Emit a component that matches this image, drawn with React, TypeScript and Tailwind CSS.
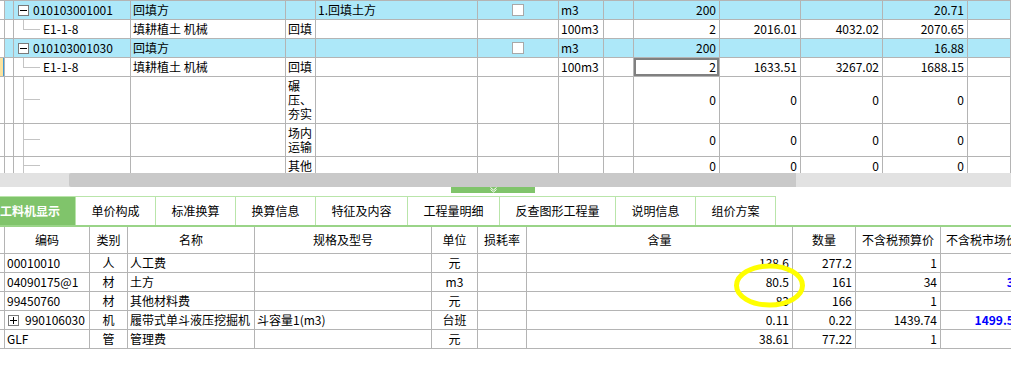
import React from 'react'

type Align = 'left' | 'right' | 'center' | 'none'

const topW = [
  'w-[5px]', 'w-[9px]', 'w-[117px]', 'w-[155px]', 'w-[30px]', 'w-[162px]', 'w-[81px]',
  'w-[45px]', 'w-[30px]', 'w-[86px]', 'w-[81px]', 'w-[82px]', 'w-[85px]', 'w-[60px]',
]

const botW = [
  'w-[5px]', 'w-[85px]', 'w-[38px]', 'w-[127px]', 'w-[177px]', 'w-[46px]', 'w-[49px]',
  'w-[266px]', 'w-[63px]', 'w-[85px]', 'w-[84px]',
]

const Cell = ({
  w,
  align = 'left',
  className = '',
  children,
}: {
  w: string
  align?: Align
  className?: string
  children?: React.ReactNode
}) => {
  const a =
    align === 'right'
      ? 'justify-end pr-[3px] text-right'
      : align === 'center'
        ? 'justify-center text-center'
        : align === 'left'
          ? 'justify-start pl-[2px]'
          : ''
  return (
    <div className={`${w} shrink-0 flex items-center border-r border-[#b4b4b4] overflow-hidden whitespace-pre-wrap ${a} ${className}`}>
      {children}
    </div>
  )
}

const MinusBox = () => (
  <span className="w-[11px] h-[11px] border border-[#7a7a7a] bg-white flex items-center justify-center shrink-0">
    <span className="w-[7px] h-px bg-black" />
  </span>
)

const PlusBox = () => (
  <span className="relative w-[11px] h-[11px] border border-[#7a7a7a] bg-white flex items-center justify-center shrink-0">
    <span className="w-[7px] h-px bg-black" />
    <span className="absolute w-px h-[7px] bg-black" />
  </span>
)

const CheckBox = () => <span className="w-[12px] h-[12px] border border-[#a8a8a8] bg-white" />

// 明细行的树形连线
const ChildBranch = ({ label }: { label: string }) => (
  <div className="flex h-full items-start">
    <div className="ml-[9px] w-[17px] h-[10px] border-l border-b border-[#c4c4c4]" />
    <span className="ml-[3px] self-center">{label}</span>
  </div>
)

const FullBranch = () => (
  <div className="flex h-full">
    <div className="ml-[9px] w-[17px] h-full border-l border-[#c4c4c4] flex flex-col">
      <div className="h-1/2 border-b border-[#c4c4c4]" />
    </div>
  </div>
)

type TopRow = {
  h: string
  blue?: boolean
  marker?: boolean
  tree: React.ReactNode
  cells: (string | null)[]
  check?: boolean
  selected?: boolean
}

const topRows: TopRow[] = [
  {
    h: 'h-[19px]',
    blue: true,
    check: true,
    tree: (
      <div className="flex items-center gap-[4px] ml-[4px]">
        <MinusBox />
        <span>010103001001</span>
      </div>
    ),
    cells: ['回填方', '', '1.回填土方', null, 'm3', '', '200', '', '', '20.71', ''],
  },
  {
    h: 'h-[19px]',
    tree: <ChildBranch label="E1-1-8" />,
    cells: ['填耕植土 机械', '回填', '', '', '100m3', '', '2', '2016.01', '4032.02', '2070.65', ''],
  },
  {
    h: 'h-[19px]',
    blue: true,
    check: true,
    tree: (
      <div className="flex items-center gap-[4px] ml-[4px]">
        <MinusBox />
        <span>010103001030</span>
      </div>
    ),
    cells: ['回填方', '', '', null, 'm3', '', '200', '', '', '16.88', ''],
  },
  {
    h: 'h-[19px]',
    marker: true,
    selected: true,
    tree: <ChildBranch label="E1-1-8" />,
    cells: ['填耕植土 机械', '回填', '', '', '100m3', '', '2', '1633.51', '3267.02', '1688.15', ''],
  },
  {
    h: 'h-[47px]',
    tree: <FullBranch />,
    cells: ['', '碾压、夯实', '', '', '', '', '0', '0', '0', '0', ''],
  },
  {
    h: 'h-[33px]',
    tree: <FullBranch />,
    cells: ['', '场内运输', '', '', '', '', '0', '0', '0', '0', ''],
  },
  {
    h: 'h-[19px]',
    tree: <FullBranch />,
    cells: ['', '其他', '', '', '', '', '0', '0', '0', '0', ''],
  },
]

const rightCols = [6, 7, 8, 9]

const tabs = ['工料机显示', '单价构成', '标准换算', '换算信息', '特征及内容', '工程量明细', '反查图形工程量', '说明信息', '组价方案']
const tabW = ['w-[76px]', 'w-[80px]', 'w-[80px]', 'w-[80px]', 'w-[92px]', 'w-[92px]', 'w-[116px]', 'w-[80px]', 'w-[80px]']

const headers = ['', '编码', '类别', '名称', '规格及型号', '单位', '损耗率', '含量', '数量', '不含税预算价', '不含税市场价']

type BotRow = {
  code: string
  plus?: boolean
  kind: string
  name: string
  spec: string
  unit: string
  qty: string
  amount: string
  budget: string
  market?: string
}

const botRows: BotRow[] = [
  { code: '00010010', kind: '人', name: '人工费', spec: '', unit: '元', qty: '138.6', amount: '277.2', budget: '1' },
  { code: '04090175@1', kind: '材', name: '土方', spec: '', unit: 'm3', qty: '80.5', amount: '161', budget: '34', market: '34' },
  { code: '99450760', kind: '材', name: '其他材料费', spec: '', unit: '元', qty: '83', amount: '166', budget: '1' },
  { code: '990106030', plus: true, kind: '机', name: '履带式单斗液压挖掘机', spec: '斗容量1(m3)', unit: '台班', qty: '0.11', amount: '0.22', budget: '1439.74', market: '1499.55' },
  { code: 'GLF', kind: '管', name: '管理费', spec: '', unit: '元', qty: '38.61', amount: '77.22', budget: '1' },
]

export default function App() {
  return (
    <div className="relative w-[1011px] h-[371px] overflow-hidden bg-white text-black text-[12px] leading-[14px] font-[family-name:'Noto_Sans_CJK_SC',sans-serif]">
      {/* 上部清单表格 */}
      <div className="h-[173px] overflow-hidden border-t border-[#b4b4b4]">
        {topRows.map((r, i) => (
          <div key={i} className={`flex ${r.h} border-b border-[#b4b4b4] ${r.blue ? 'bg-[#ade8f9]' : 'bg-white'}`}>
            <Cell w={topW[0]} align="none" className="bg-white">
              {r.marker && (
                <div className="flex h-full">
                  <div className="w-[3px] bg-[#fbe3a0]" />
                  <div className="w-px bg-[#3d9ad6]" />
                </div>
              )}
            </Cell>
            <Cell w={topW[1]} align="none" />
            <Cell w={topW[2]} align="none" className="items-stretch">
              <div className="flex h-full items-center">{r.tree}</div>
            </Cell>
            {r.cells.map((c, j) => {
              const col = j + 3
              if (c === null) {
                return (
                  <Cell key={j} w={topW[col]} align="center">
                    {r.check && <CheckBox />}
                  </Cell>
                )
              }
              const isRight = rightCols.includes(j)
              const sel = r.selected && j === 6
              return (
                <Cell
                  key={j}
                  w={topW[col]}
                  align={isRight ? 'right' : 'left'}
                  className={`${j === 10 ? 'flex-1' : ''} ${sel ? 'bg-white shadow-[inset_0_0_0_2px_#808080]' : ''}`}
                >
                  {c}
                </Cell>
              )
            })}
          </div>
        ))}
      </div>

      {/* 横向滚动条 */}
      <div className="flex h-[14px] bg-[#e2e2e2]">
        <div className="w-[69px]" />
        <div className="w-[727px] bg-[#c9c9c9] rounded-l-[2px]" />
      </div>

      {/* 分隔拖动柄 */}
      <div className="h-[9px] flex">
        <div className="ml-[451px] w-[84px] h-[6px] bg-[#80c46b] flex justify-center">
          <svg width="9" height="6" viewBox="0 0 9 6" className="block">
            <polyline points="1.5,0.5 4.5,3 7.5,0.5" fill="none" stroke="#ffffff" strokeWidth="1" />
            <polyline points="1.5,2.5 4.5,5 7.5,2.5" fill="none" stroke="#ffffff" strokeWidth="1" />
          </svg>
        </div>
      </div>

      {/* 页签 */}
      <div className="flex h-[31px] border-b-2 border-[#9ad488]">
        {tabs.map((t, i) => (
          <div
            key={t}
            className={`${tabW[i]} shrink-0 flex items-center border-t border-r border-[#b9e5aa] text-[12px] ${
              i === 0 ? 'bg-[#80c46b] text-white font-bold justify-start pl-0 border-[#80c46b]' : 'justify-center text-black'
            }`}
          >
            {t}
          </div>
        ))}
      </div>

      {/* 工料机明细表 */}
      <div className="w-[1030px]">
        <div className="flex h-[27px] border-b border-[#b4b4b4]">
          {headers.map((h, i) => (
            <Cell key={i} w={botW[i]} align={i === 10 ? 'left' : 'center'} className={`whitespace-nowrap ${i === 10 ? 'pl-[5px]' : ''}`}>
              {h}
            </Cell>
          ))}
        </div>
        {botRows.map((r) => (
          <div key={r.code} className="flex h-[19px] border-b border-[#b4b4b4]">
            <Cell w={botW[0]} align="none" />
            <Cell w={botW[1]} align="left" className="whitespace-nowrap">
              {r.plus ? (
                <div className="flex items-center gap-[6px] ml-[1px]">
                  <PlusBox />
                  <span>{r.code}</span>
                </div>
              ) : (
                r.code
              )}
            </Cell>
            <Cell w={botW[2]} align="center">{r.kind}</Cell>
            <Cell w={botW[3]} align="left" className="whitespace-nowrap">{r.name}</Cell>
            <Cell w={botW[4]} align="left" className="whitespace-nowrap">{r.spec}</Cell>
            <Cell w={botW[5]} align="center">{r.unit}</Cell>
            <Cell w={botW[6]} align="left" />
            <Cell w={botW[7]} align="right">{r.qty}</Cell>
            <Cell w={botW[8]} align="right">{r.amount}</Cell>
            <Cell w={botW[9]} align="right">{r.budget}</Cell>
            <Cell w={botW[10]} align="right" className="font-bold text-[#0000ff]">{r.market ?? ''}</Cell>
          </div>
        ))}
      </div>

      {/* 标注圈 */}
      <svg className="absolute left-[733px] top-[263px]" width="73" height="45" viewBox="0 0 73 45">
        <ellipse cx="36.5" cy="22.5" rx="33" ry="19.5" fill="none" stroke="#ffff00" strokeWidth="5" />
      </svg>
    </div>
  )
}
